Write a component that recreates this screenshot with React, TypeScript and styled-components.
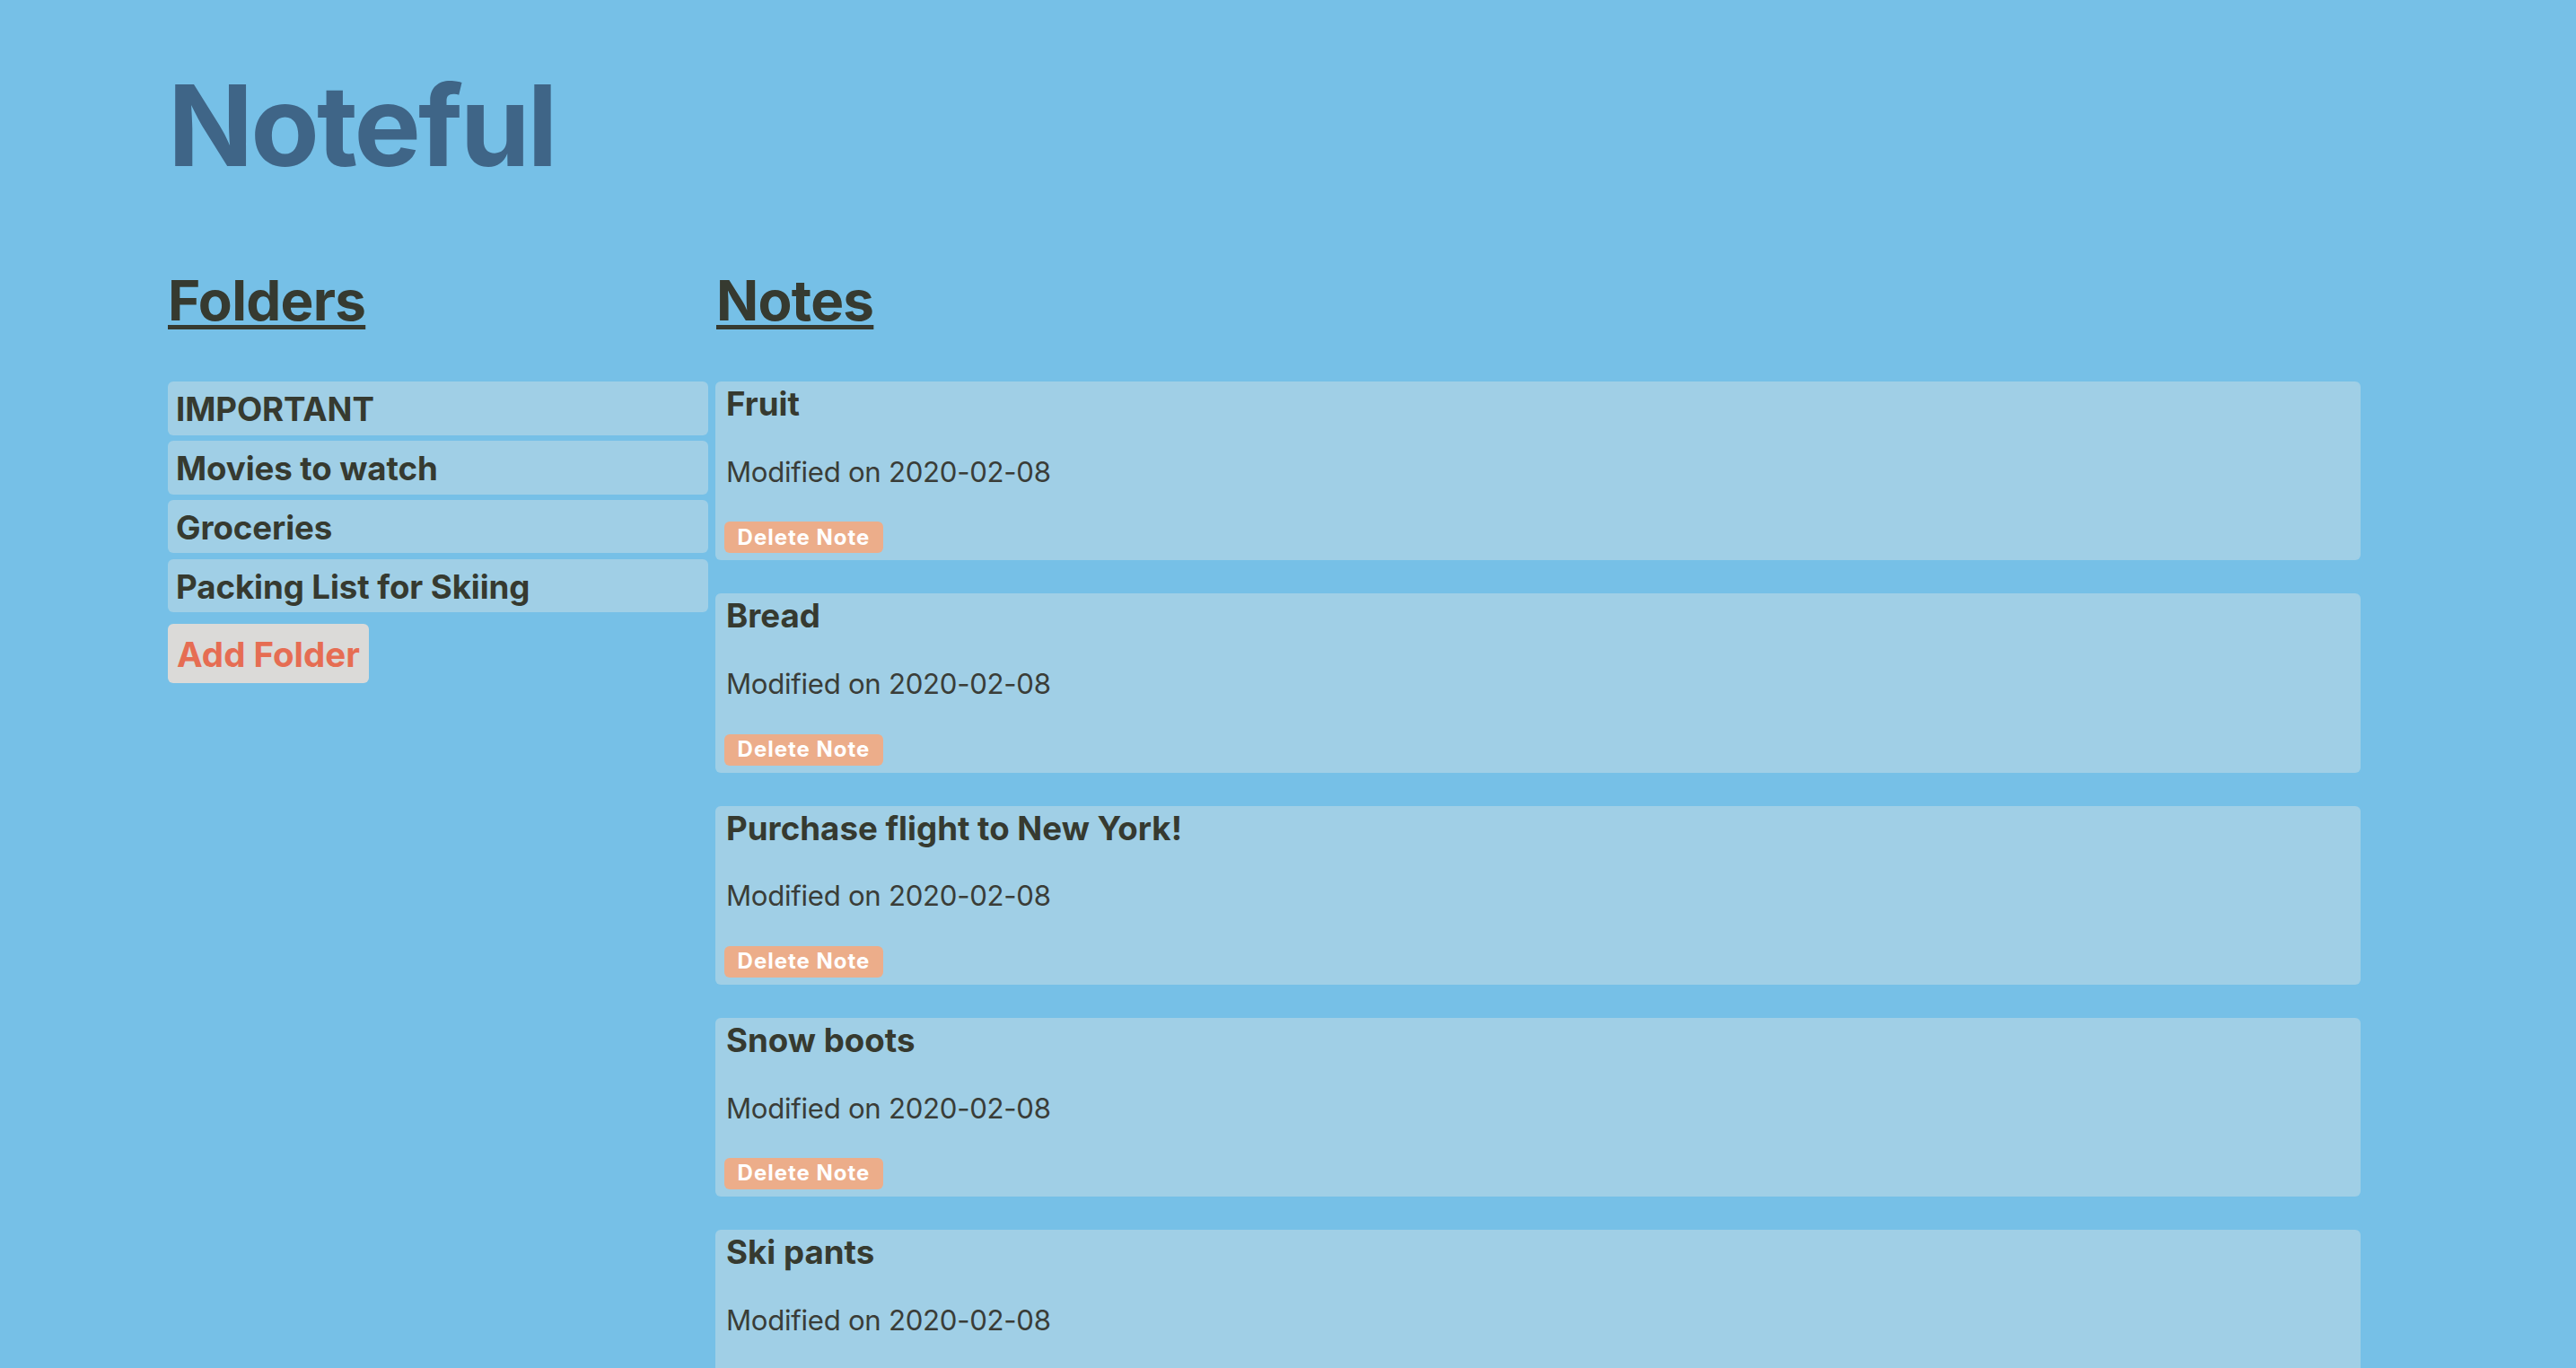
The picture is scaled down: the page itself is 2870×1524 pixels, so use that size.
import React from "react";
import styled, { createGlobalStyle } from "styled-components";

const GlobalStyle = createGlobalStyle`
  html, body {
    margin: 0;
    padding: 0;
    background: #76c0e7;
    font-family: Inter, Roboto, "Noto Sans", Arial, sans-serif;
  }
`;

const Page = styled.div`
  padding: 64px 0 0 187px;
  min-height: 1524px;
  box-sizing: border-box;
`;

const Title = styled.h1`
  margin: 0;
  font-size: 125px;
  font-weight: 700;
  line-height: 1.21;
  letter-spacing: -0.024em;
  color: #3f6587;
`;

const Columns = styled.div`
  display: flex;
  gap: 8px;
  margin-top: 82px;
`;

const Sidebar = styled.aside`
  width: 602px;
  flex: none;
`;

const Main = styled.main`
  width: 1833px;
  flex: none;
`;

const SectionHeading = styled.h2<{ $indent?: number }>`
  margin: 0 0 53px ${(p) => p.$indent ?? 0}px;
  font-size: 62px;
  font-weight: 700;
  line-height: 1.21;
  letter-spacing: -0.012em;
  color: #363a30;
  text-decoration: underline;
  text-decoration-thickness: 5px;
  text-underline-offset: 5px;
`;

const FolderList = styled.ul`
  list-style: none;
  margin: 0;
  padding: 0;
  display: flex;
  flex-direction: column;
  gap: 6.5px;
`;

const FolderItem = styled.li`
  background: #a0cfe6;
  border-radius: 6px;
  padding: 9px 9px 6px;
  font-size: 36.7px;
  font-weight: 700;
  line-height: 1.21;
  letter-spacing: -0.1px;
  color: #363a30;
`;

const AddFolderButton = styled.button`
  margin-top: 13px;
  height: 66px;
  width: 224px;
  border: none;
  border-radius: 6px;
  background: #dbdad8;
  color: #e66d53;
  font-family: Inter, Roboto, Arial, sans-serif;
  font-size: 38.5px;
  font-weight: 700;
  line-height: 1.21;
  text-align: left;
  padding: 2px 0 0 10px;
  cursor: pointer;
`;

const NoteList = styled.div`
  display: flex;
  flex-direction: column;
  gap: 37px;
`;

const NoteCard = styled.section`
  background: #a0cfe6;
  border-radius: 6px;
  padding: 3px 12px 8px;
  display: flex;
  flex-direction: column;
  align-items: flex-start;
`;

const NoteTitle = styled.h3`
  margin: 0;
  font-size: 36.7px;
  font-weight: 700;
  line-height: 1.21;
  color: #363a30;
`;

const NoteDate = styled.p`
  margin: 35.5px 0 0;
  font-size: 31.2px;
  font-weight: 400;
  line-height: 1.21;
  letter-spacing: -0.3px;
  color: #3a3d38;
`;

const DeleteButton = styled.button`
  margin: 35.5px 0 0 -2px;
  height: 35px;
  width: 177px;
  border: none;
  border-radius: 6px;
  background: #ecad8a;
  color: #ffffff;
  font-family: Inter, Roboto, Arial, sans-serif;
  font-size: 24px;
  font-weight: 700;
  letter-spacing: 1px;
  line-height: 1;
  padding: 0;
  cursor: pointer;
`;

const folders = ["IMPORTANT", "Movies to watch", "Groceries", "Packing List for Skiing"];
const notes = ["Fruit", "Bread", "Purchase flight to New York!", "Snow boots", "Ski pants"];

export default function App() {
  return (
    <>
      <GlobalStyle />
      <Page>
        <Title>Noteful</Title>
        <Columns>
          <Sidebar>
            <SectionHeading>Folders</SectionHeading>
            <FolderList>
              {folders.map((f) => (
                <FolderItem key={f}>{f}</FolderItem>
              ))}
            </FolderList>
            <AddFolderButton>Add Folder</AddFolderButton>
          </Sidebar>
          <Main>
            <SectionHeading $indent={1}>Notes</SectionHeading>
            <NoteList>
              {notes.map((n) => (
                <NoteCard key={n}>
                  <NoteTitle>{n}</NoteTitle>
                  <NoteDate>Modified on 2020-02-08</NoteDate>
                  <DeleteButton>Delete Note</DeleteButton>
                </NoteCard>
              ))}
            </NoteList>
          </Main>
        </Columns>
      </Page>
    </>
  );
}
